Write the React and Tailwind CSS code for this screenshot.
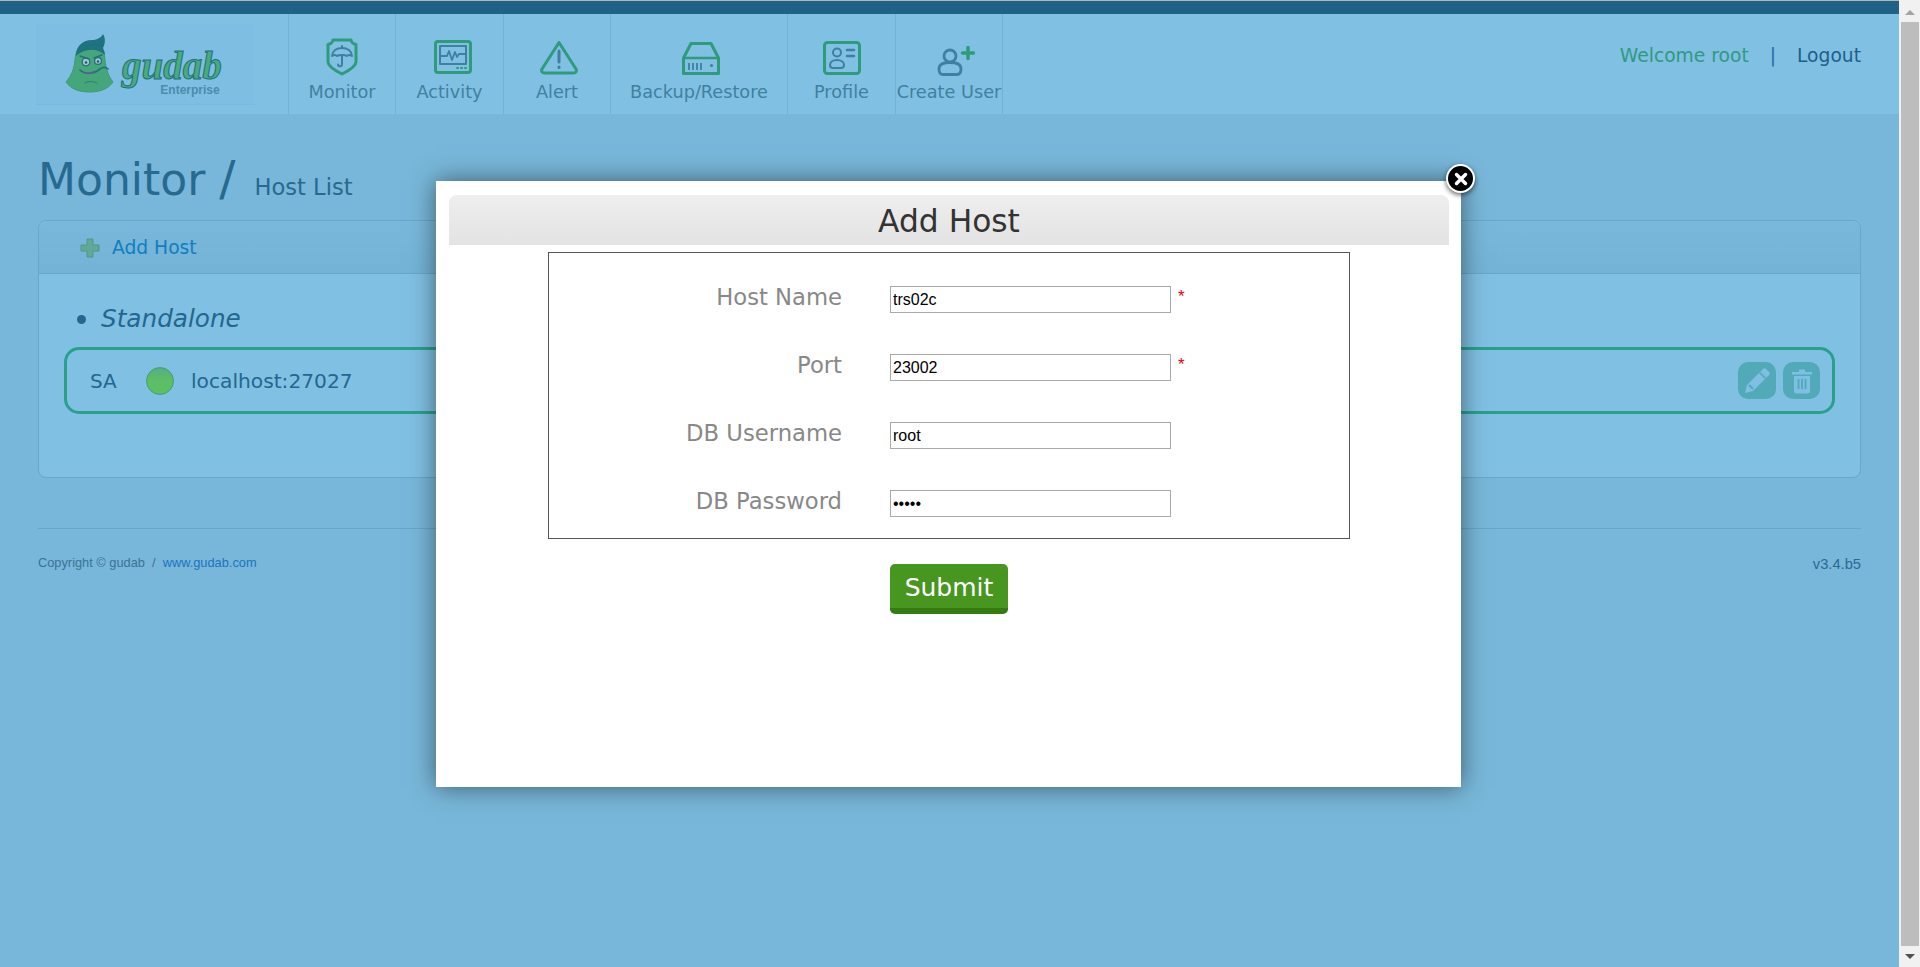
import React from "react";

const sans = "font-['DejaVu_Sans','Liberation_Sans',sans-serif]";
const arial = "font-['Liberation_Sans',Arial,sans-serif]";

const MonitorIcon = () => (
  <svg width="32" height="38" viewBox="0 0 32 38" fill="none" strokeLinecap="round" strokeLinejoin="round">
    <path d="M7 2h18c.5 2.500 2.500 4 5 4.500V24c0 4-8 9-14 12C10 33 2 28 2 24V6.500C4.500 6 6.500 4.500 7 2z" stroke="#2f9a7c" strokeWidth="3" />
    <path d="M6 18c.500-5 4.500-8 10-8s9.500 3 10 8c-2-1.500-4-1.500-5 0-1.500-1.500-8.500-1.500-10 0-1-1.500-3-1.500-5 0z" stroke="#3f7f9f" strokeWidth="2" />
    <path d="M16 8v2M16 17v9c0 3-4 3-4 .5" stroke="#3f7f9f" strokeWidth="2" />
  </svg>
);

const ActivityIcon = () => (
  <svg width="38" height="34" viewBox="0 0 38 34" fill="none" strokeLinecap="round" strokeLinejoin="round">
    <rect x="1.500" y="1.500" width="35" height="31" rx="2.500" stroke="#2f9a7c" strokeWidth="3" />
    <rect x="6" y="6" width="26" height="18" stroke="#3f7f9f" strokeWidth="2" />
    <path d="M6 16h7l2-5 3 9 3-8 2 5 2-3h7" stroke="#3f7f9f" strokeWidth="1.800" />
    <path d="M23 28h1M27 28h1M31 28h1" stroke="#2f9a7c" strokeWidth="2" />
  </svg>
);

const AlertIcon = () => (
  <svg width="38" height="35" viewBox="0 0 38 35" fill="none" strokeLinecap="round" strokeLinejoin="round">
    <path d="M19 2.500 36 29c1 2 0 4-2.500 4h-29C2 33 1 31 2 29z" stroke="#2f9a7c" strokeWidth="3" />
    <path d="M19 11v11" stroke="#3f7f9f" strokeWidth="3" />
    <path d="M19 27v.5" stroke="#3f7f9f" strokeWidth="3" />
  </svg>
);

const BackupIcon = () => (
  <svg width="38" height="33" viewBox="0 0 38 33" fill="none" strokeLinejoin="round">
    <path d="M9 1.500h20L36.500 16v15.500h-35V16z" stroke="#2f9a7c" strokeWidth="3" />
    <path d="M2 16h34" stroke="#2f9a7c" strokeWidth="2.500" />
    <path d="M7 21v7M11 21v7M15 21v7M19 21v7" stroke="#3f7f9f" strokeWidth="1.800" />
    <circle cx="29.500" cy="23.500" r="1.600" fill="#3f7f9f" />
  </svg>
);

const ProfileIcon = () => (
  <svg width="38" height="34" viewBox="0 0 38 34" fill="none" strokeLinecap="round" strokeLinejoin="round">
    <rect x="1.500" y="1.500" width="35" height="31" rx="3" stroke="#2f9a7c" strokeWidth="3" />
    <circle cx="14" cy="11.500" r="4" stroke="#3f7f9f" strokeWidth="2" />
    <path d="M7 24c0-3 3-5 7-5s7 2 7 5c0 2-1 3-3 3h-8c-2 0-3-1-3-3z" stroke="#3f7f9f" strokeWidth="2" />
    <path d="M24 9h7M24 15h7" stroke="#3f7f9f" strokeWidth="2.500" />
  </svg>
);

const CreateUserIcon = () => (
  <svg width="38" height="30" viewBox="0 0 38 30" fill="none" strokeLinecap="round" strokeLinejoin="round">
    <circle cx="13" cy="10" r="6" stroke="#3f7f9f" strokeWidth="2.800" />
    <path d="M2 23c0-4 4-6.500 11-6.500S24 19 24 23c0 3.500-1.500 5.500-4 5.500H6c-2.500 0-4-2-4-5.500z" stroke="#3f7f9f" strokeWidth="2.800" />
    <path d="M31 1.500v11M25.500 7h11" stroke="#2f9a7c" strokeWidth="3.500" />
  </svg>
);

const navItems = [
  { label: "Monitor", icon: MonitorIcon, width: "w-[107px]", iconPos: "" },
  { label: "Activity", icon: ActivityIcon, width: "w-[108px]", iconPos: "mb-[2px] ml-[6px]" },
  { label: "Alert", icon: AlertIcon, width: "w-[107px]", iconPos: "mb-[1px] ml-[3px]" },
  { label: "Backup/Restore", icon: BackupIcon, width: "w-[177px]", iconPos: "mb-[1px] ml-[3px]" },
  { label: "Profile", icon: ProfileIcon, width: "w-[108px]", iconPos: "mb-[1px]" },
  { label: "Create User", icon: CreateUserIcon, width: "w-[107px]", iconPos: "ml-[13px]" },
];

const Logo = () => (
  <div className="ml-[36px] mt-[10px] flex h-[81px] w-[219px] items-start border-b border-[#7ab9dd] bg-[#7ebee2]">
    <svg className="ml-[29px] mt-[10px] shrink-0" width="50" height="60" viewBox="0 0 50 60">
      <path d="M24 8C14 8 11 16 10 26 9 36 6 42 1 48c5 7 13 10 24 10 10 0 18-3 23-10-4-5-7-12-8-22C39 14 34 8 24 8z" fill="#45a67c" stroke="#3b9a7c" strokeWidth="1" />
      <path d="M11 22C11 12 18 6 27 6c4 0 9-2 11-6 3 5 2 10 0 14 1 2 2 5 2 7-8-7-20-7-29 1z" fill="#1f7280" />
      <circle cx="21" cy="28" r="3.800" fill="#9cc8d6" stroke="#2a6f78" strokeWidth="1.300" />
      <circle cx="33" cy="27" r="3.400" fill="#9cc8d6" stroke="#2a6f78" strokeWidth="1.300" />
      <circle cx="21" cy="28.500" r="1.300" fill="#235c70" />
      <circle cx="33" cy="27.500" r="1.200" fill="#235c70" />
      <path d="M15 22l9 3M37 21l-8 3" stroke="#2a6f78" strokeWidth="1.500" strokeLinecap="round" />
      <path d="M15 36c5 5 14 4 20-1 3-2 6-2 8 0" fill="none" stroke="#2a6f78" strokeWidth="1.700" strokeLinecap="round" />
      <path d="M17 38c5 3 10 2 14-1-5 1-9 2-14 1z" fill="#6a5a98" />
      <path d="M20 49c3-2 8-2 12 0" fill="none" stroke="#2f8a70" strokeWidth="1.300" strokeLinecap="round" />
    </svg>
    <div className="ml-[7px] mt-[26px] flex flex-col items-end">
      <span className="font-['Liberation_Serif',serif] text-[39px] font-bold italic leading-[32px] text-[#47ab7c] [-webkit-text-stroke:1px_#1f6f7a]">gudab</span>
      <span className={`${arial} mr-[2px] mt-[2px] text-[12px] font-bold leading-[12px] text-[#4a8cad]`}>Enterprise</span>
    </div>
  </div>
);

const Header = () => (
  <header className="flex h-[100px] bg-[#80c0e3]">
    <div className="w-[288px] shrink-0">
      <Logo />
    </div>
    <nav className="flex border-l border-[#73b1d5]">
      {navItems.map((item) => (
        <div
          key={item.label}
          className={`${item.width} flex flex-col items-center border-r border-[#73b1d5] pt-[25px]`}
        >
          <div className="flex h-[37px] items-end">
            <div className={item.iconPos}>
              <item.icon />
            </div>
          </div>
          <span className="mt-[4px] whitespace-nowrap text-[17.700px] leading-[24px] text-[#41809f]">
            {item.label}
          </span>
        </div>
      ))}
    </nav>
    <div className="ml-auto mr-[38px] mt-[29px] flex h-[26px] items-center text-[18.700px]">
      <span className="text-[#2f9a80]">Welcome root</span>
      <span className="mx-[21px] text-[#1f6d9c]">|</span>
      <span className="text-[#1d5f88]">Logout</span>
    </div>
  </header>
);

const HostPanel = () => (
  <section className="h-[258px] rounded-[8px] border border-[#68a6ca] bg-[#80c0e3]">
    <div className="flex h-[53px] items-center rounded-t-[8px] border-b border-[#68a6ca] bg-gradient-to-b from-[#79b8db] to-[#74b3d6] pl-[41px] pt-[2px]">
      <svg width="20" height="20" viewBox="0 0 20 20">
        <path d="M7 1h6v6h6v6h-6v6H7v-6H1V7h6z" fill="#61a896" stroke="#4f9a85" strokeWidth="1" />
      </svg>
      <span className="ml-[12px] text-[18.700px] text-[#0f7fc0]">Add Host</span>
    </div>
    <div className="px-[25px] pt-[29px]">
      <h3 className="flex h-[32px] items-center pl-[13px] text-[24.700px] italic text-[#23678f]">
        <span className="mr-[15px] h-[9px] w-[9px] rounded-full bg-[#23678f]" />
        Standalone
      </h3>
      <div className="mt-[12px] flex h-[67px] items-center rounded-[15px] border-[3px] border-[#2aa08c] pl-[23px] pr-[12px]">
        <span className="w-[56px] text-[20px] text-[#23678f]">SA</span>
        <span className="h-[28px] w-[28px] rounded-full border border-[#3f9f78] bg-gradient-to-b from-[#55ae7c] via-[#5cbf63] to-[#5cbf63]" />
        <span className="ml-[17px] mt-[2px] text-[20.200px] text-[#23678f]">localhost:27027</span>
        <div className="ml-auto flex gap-[7px]">
          <div className="flex h-[37px] w-[38px] items-center justify-center rounded-[10px] bg-[#52a9b8]">
            <svg width="26" height="26" viewBox="0 0 26 26">
              <path d="M1 25l2-8L17 3l6 6L9 23z" fill="#7fbfe3" />
              <path d="M5 17l4 4" stroke="#52a9b8" strokeWidth="2" />
              <path d="M17 3l2-2c1-1 2-1 3 0l3 3c1 1 1 2 0 3l-2 2z" fill="#7fbfe3" />
              <path d="M15.500 4.500l6 6" stroke="#52a9b8" strokeWidth="1.500" />
            </svg>
          </div>
          <div className="flex h-[37px] w-[37px] items-center justify-center rounded-[10px] bg-[#52a9b8]">
            <svg width="22" height="26" viewBox="0 0 22 26">
              <path d="M1 4h20v2.500H1zM8 1.500h6V4H8z" fill="#7fbfe3" />
              <path d="M3 8h16v15c0 1.500-1 2.500-2.500 2.500h-11C4 25.500 3 24.500 3 23z" fill="#7fbfe3" />
              <path d="M7.500 11v10M11 11v10M14.500 11v10" stroke="#52a9b8" strokeWidth="1.800" />
            </svg>
          </div>
        </div>
      </div>
    </div>
  </section>
);

const Scrollbar = () => (
  <div className="flex w-[21px] shrink-0 flex-col bg-[#f1f1f1] pl-[2px] pr-[1.500px]">
    <div className="flex h-[22px] items-center justify-center pt-[3px]">
      <span className="h-0 w-0 border-x-[5px] border-b-[5px] border-x-transparent border-b-[#a3a3a3]" />
    </div>
    <div className="h-[924px] bg-[#bdbdbd]" />
    <div className="flex h-[21px] items-center justify-center">
      <span className="h-0 w-0 border-x-[5px] border-t-[5px] border-x-transparent border-t-[#505050]" />
    </div>
  </div>
);

const fields = [
  { label: "Host Name", value: "trs02c", required: true },
  { label: "Port", value: "23002", required: true },
  { label: "DB Username", value: "root" },
  { label: "DB Password", value: "admin", type: "password" },
];

const AddHostModal = () => (
  <div className="absolute left-[436px] top-[181px] h-[606px] w-[1025px] bg-white pl-[13px] pr-[12px] pt-[14px] shadow-[0_0_24px_rgba(0,0,0,0.5)]">
    <h2 className="flex h-[50px] items-center justify-center rounded-t-[8px] bg-gradient-to-b from-[#eeeeee] to-[#e3e3e3] pt-[2px] text-[31.300px] text-[#333333]">
      Add Host
    </h2>
    <div className="ml-[99px] mt-[7px] flex h-[287px] w-[802px] flex-col gap-[41px] border border-[#555555] pt-[33px]">
      {fields.map((field) => (
        <div key={field.label} className="flex h-[27px] items-center">
          <label className="mt-[-4px] w-[293px] text-right text-[22.700px] leading-[27px] text-[#888888]">
            {field.label}
          </label>
          <input
            readOnly
            type={field.type || "text"}
            value={field.value}
            className={`${arial} ml-[48px] h-[27px] w-[281px] border border-[#a9a9a9] px-[2px] text-[16px] text-black outline-none`}
          />
          {field.required && <span className={`${arial} ml-[7px] mt-[-6px] text-[17px] text-red-600`}>*</span>}
        </div>
      ))}
    </div>
    <div className="ml-[441px] mt-[25px]">
      <button className="h-[50px] w-[118px] rounded-[5px] border-b-[6px] border-[#347c10] bg-[#46961f] pt-[4px] text-[25px] text-white">
        Submit
      </button>
    </div>
    <button className="absolute right-[-14px] top-[-17px] flex h-[29px] w-[29px] items-center justify-center rounded-full border-[2px] border-white bg-black shadow-[0_2px_5px_rgba(0,0,0,0.6)]">
      <svg width="14" height="14" viewBox="0 0 14 14">
        <path d="M2.500 2.500l9 9M11.500 2.500l-9 9" stroke="#ffffff" strokeWidth="3.500" strokeLinecap="round" />
      </svg>
    </button>
  </div>
);

const App = () => {
  return (
    <div className={`${sans} relative flex h-screen w-full overflow-hidden bg-[#78b7d9]`}>
      <div className="min-w-0 flex-1">
        <div className="h-[14px] border-t border-[#b5b5b5] bg-[#1f6285]" />
        <Header />
        <main className="px-[38px]">
          <div className="flex h-[106px] items-baseline pt-[34px]">
            <h1 className="text-[44px] leading-[60px] text-[#27698f]">
              Monitor <span className="text-[48px]">/</span>
            </h1>
            <span className="ml-[19px] text-[22.600px] text-[#27698f]">Host List</span>
          </div>
          <HostPanel />
          <hr className="mt-[50px] border-[#68a6ca]" />
          <footer className="mt-[21px] flex items-center justify-between">
            <span className={`${arial} text-[12.800px] text-[#3a7296]`}>
              Copyright © gudab&nbsp; /&nbsp; <span className="text-[#1a74c0]">www.gudab.com</span>
            </span>
            <span className={`${arial} mt-[3px] text-[14.700px] text-[#2a6a94]`}>v3.4.b5</span>
          </footer>
        </main>
      </div>
      <Scrollbar />
      <AddHostModal />
    </div>
  );
};

export default App;
